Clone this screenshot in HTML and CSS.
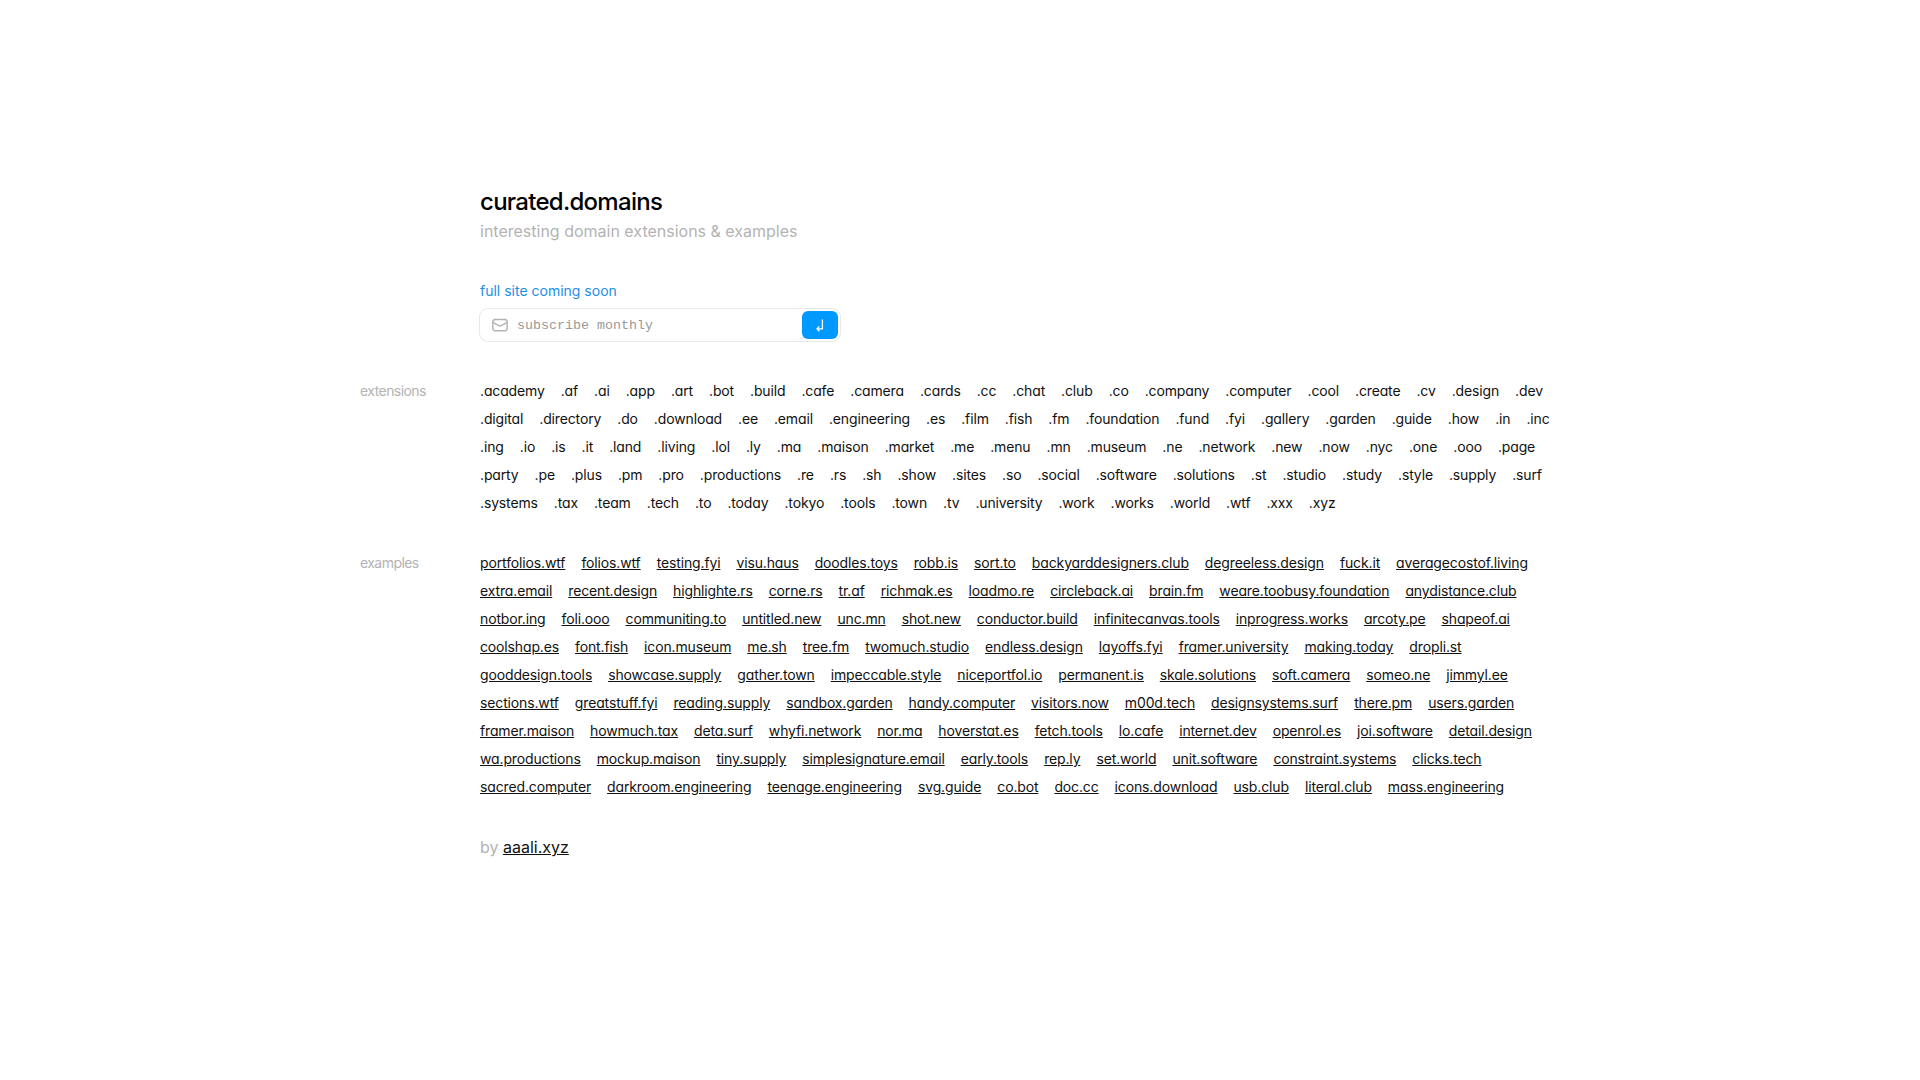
FILE: index.html
```
<!doctype html>
<html lang="en">

<head>
	<meta charset="UTF-8">
	<meta name="viewport" content="width=device-width, initial-scale=1">
	<title>curated.domains</title>
	<link rel="stylesheet" href="styles.css">
</head>

<body>
	<main class="page">
		<header class="intro">
			<h1>curated.domains</h1>
			<p class="tagline">interesting domain extensions &amp; examples</p>
		</header>

		<form class="signup">
			<label class="soon" for="email">full site coming soon</label>
			<div class="field">
				<svg class="mail" width="16" height="16" viewBox="0 0 16 16" fill="none" stroke="#b3b3b3" stroke-width="1.4" stroke-linecap="round" stroke-linejoin="round">
					<rect x="0.8" y="2.5" width="14.4" height="11.2" rx="2.4" />
					<path d="M1.2 5.6L6.7 8.6Q8 9.3 9.3 8.6L14.8 5.6" />
				</svg>
				<input type="email" id="email" placeholder="subscribe monthly">
				<button type="submit" aria-label="subscribe">
					<svg width="12" height="14" viewBox="0 0 12 14" fill="none" stroke="#fff" stroke-width="1.3">
						<path d="M8.4 1.5V10.8H3.2M5.4 8.4L3 10.8L5.4 13.2" />
					</svg>
				</button>
			</div>
		</form>

		<section class="group">
			<h2>extensions</h2>
			<ul class="list" id="extensions"></ul>
		</section>

		<section class="group">
			<h2>examples</h2>
			<ul class="list" id="examples"></ul>
		</section>

		<footer class="author">by <a href="#">aaali.xyz</a></footer>
	</main>
	<script src="domains.js"></script>
</body>

</html>
```

FILE: styles.css
```
* {
	box-sizing: border-box;
}

body {
	margin: 0;
	background: #fff;
	color: #111;
	font-family: Inter, "Liberation Sans", sans-serif;
	font-size: 14px;
	line-height: 20px;
}

h1,
h2,
p,
ul {
	margin: 0;
	padding: 0;
}

a {
	color: inherit;
}

.page {
	display: flex;
	flex-direction: column;
	justify-content: center;
	gap: 40px;
	max-width: 1200px;
	min-height: 100vh;
	margin: 0 auto;
	padding-bottom: 37px;
}

.intro,
.signup,
.author {
	margin-left: 120px;
}

h1 {
	color: #000;
	font-size: 24px;
	font-weight: 500;
	line-height: 32px;
	letter-spacing: -0.03em;
}

.tagline,
.author {
	color: #b3b3b3;
	font-size: 16px;
	line-height: 20px;
}

.tagline {
	padding-top: 3px;
}

.author a {
	color: #111;
}

.signup {
	display: flex;
	flex-direction: column;
	gap: 8px;
	max-width: 360px;
}

.soon {
	color: #1c8ee6;
}

.field {
	display: flex;
	align-items: center;
	height: 32px;
	padding: 2px;
	border-radius: 8px;
	box-shadow: 0 0 0 1px #e8e8e8;
}

.mail {
	flex: none;
	margin-left: 10px;
}

.field input {
	flex: 1;
	min-width: 0;
	padding: 0 9px;
	border: 0;
	outline: 0;
	background: none;
	font-family: "Liberation Mono", monospace;
}

.field input::placeholder {
	color: #999;
}

.field button {
	display: flex;
	align-items: center;
	justify-content: center;
	width: 36px;
	height: 28px;
	padding: 0;
	border: 0;
	border-radius: 6px;
	background: #09f;
}

.group {
	display: flex;
}

h2 {
	flex: none;
	width: 120px;
	color: #b3b3b3;
	font-size: 14px;
	font-weight: 400;
	line-height: 20px;
	letter-spacing: -0.04em;
}

.list {
	display: flex;
	flex-wrap: wrap;
	gap: 8px 16px;
	list-style: none;
	letter-spacing: -0.01em;
	font-feature-settings: "cv11";
}
```

FILE: domains.js
```
var extensions = ".academy .af .ai .app .art .bot .build .cafe .camera .cards .cc .chat .club .co .company .computer .cool .create .cv .design .dev " +
	".digital .directory .do .download .ee .email .engineering .es .film .fish .fm .foundation .fund .fyi .gallery .garden .guide .how .in .inc " +
	".ing .io .is .it .land .living .lol .ly .ma .maison .market .me .menu .mn .museum .ne .network .new .now .nyc .one .ooo .page " +
	".party .pe .plus .pm .pro .productions .re .rs .sh .show .sites .so .social .software .solutions .st .studio .study .style .supply .surf " +
	".systems .tax .team .tech .to .today .tokyo .tools .town .tv .university .work .works .world .wtf .xxx .xyz";

var examples = "portfolios.wtf folios.wtf testing.fyi visu.haus doodles.toys robb.is sort.to backyarddesigners.club degreeless.design fuck.it averagecostof.living " +
	"extra.email recent.design highlighte.rs corne.rs tr.af richmak.es loadmo.re circleback.ai brain.fm weare.toobusy.foundation anydistance.club " +
	"notbor.ing foli.ooo communiting.to untitled.new unc.mn shot.new conductor.build infinitecanvas.tools inprogress.works arcoty.pe shapeof.ai " +
	"coolshap.es font.fish icon.museum me.sh tree.fm twomuch.studio endless.design layoffs.fyi framer.university making.today dropli.st " +
	"gooddesign.tools showcase.supply gather.town impeccable.style niceportfol.io permanent.is skale.solutions soft.camera someo.ne jimmyl.ee " +
	"sections.wtf greatstuff.fyi reading.supply sandbox.garden handy.computer visitors.now m00d.tech designsystems.surf there.pm users.garden " +
	"framer.maison howmuch.tax deta.surf whyfi.network nor.ma hoverstat.es fetch.tools lo.cafe internet.dev openrol.es joi.software detail.design " +
	"wa.productions mockup.maison tiny.supply simplesignature.email early.tools rep.ly set.world unit.software constraint.systems clicks.tech " +
	"sacred.computer darkroom.engineering teenage.engineering svg.guide co.bot doc.cc icons.download usb.club literal.club mass.engineering";

document.getElementById("extensions").innerHTML = extensions.split(" ").map(function(name) {
	return "<li>" + name + "</li>";
}).join("");

document.getElementById("examples").innerHTML = examples.split(" ").map(function(name) {
	return "<li><a href=\"https://" + name + "\">" + name + "</a></li>";
}).join("");
```
